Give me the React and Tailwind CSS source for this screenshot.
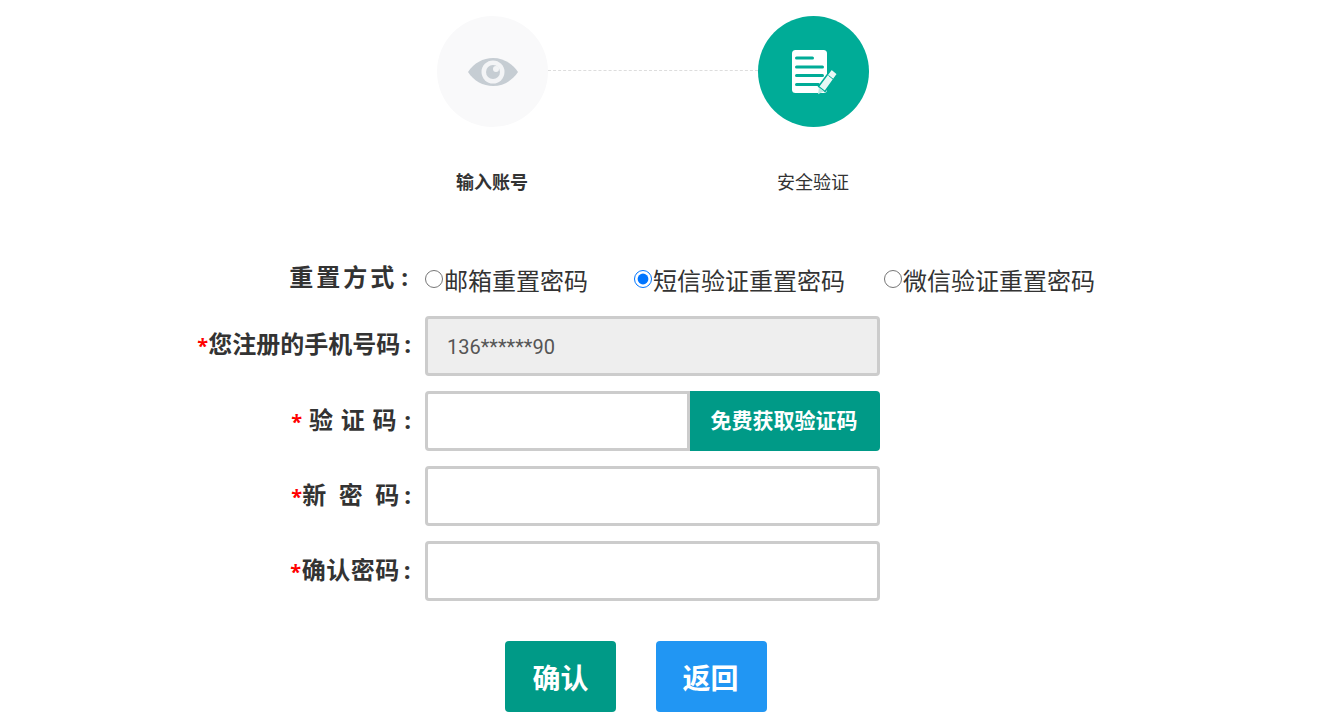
import React from 'react';

const font = { cjk: "font-['Open_Sans','Noto_Sans_CJK_SC',sans-serif]" }

const EyeIcon = () => (
    <svg width="50" height="30" viewBox="0 0 50 30">
        <path d="M0 15C6 6 15 1 25 1s19 5 25 14c-6 9-15 14-25 14S6 24 0 15z" fill="#c6cdd3" />
        <circle cx="25" cy="15" r="11.5" fill="#f3f4f6" />
        <circle cx="25" cy="15" r="7" fill="#c6cdd3" />
        <circle cx="28" cy="12" r="3" fill="#f3f4f6" />
    </svg>
)

const NoteIcon = () => (
    <svg width="46" height="46" viewBox="0 0 46 46">
        <rect x="0" y="0" width="35" height="43" rx="3.5" fill="#fff" />
        <path d="M4.500 8h16M4.500 17h26M4.500 25.500h26M4.500 34.500h22" stroke="#00ac97" strokeWidth="3" strokeLinecap="round" />
        <path d="M39.500 19L45.500 24 33 41.500 26.500 36.500z" fill="#e8f8f5" stroke="#00ac97" strokeWidth="1.500" strokeLinejoin="round" />
        <path d="M36.500 25.500l5 4" stroke="#00ac97" strokeWidth="1" />
        <path d="M27 37.500l5 3.800-6 3z" fill="#bfeae3" />
    </svg>
)

const Field = ({ mark, label, spacing, gap, up, children }) => (
    <div className="flex items-center h-[60px]">
        <div className={"w-[425px] pr-[14px] text-right text-2xl font-bold text-[#333] whitespace-pre " + up + " " + spacing}>
            <span className="text-[#f00] text-[20px]">{mark}</span>{label}<span className={gap}>:</span>
        </div>
        {children}
    </div>
)

const inputClass = "block w-[455px] h-[60px] border-[3px] border-[#ccc] rounded-[4px] bg-white outline-none"

const Radio = ({ label, checked, className }) => (
    <label className={"flex items-center " + className}>
        <input type="radio" name="way" defaultChecked={checked} className="w-[18px] h-[18px] m-0 mr-[1px] -mt-[3px]" />
        <span className="text-2xl text-[#333] pt-[2px]">{label}</span>
    </label>
)

const App = () => {
    return (
        <div className={"w-[1323px] h-[722px] overflow-hidden bg-white pt-4 " + font.cjk}>
            {/* steps */}
            <div className="ml-[437px]">
                <div className="flex items-center">
                    <div className="w-[111px] h-[111px] rounded-full bg-[#f9f9fa] flex items-center justify-center"><EyeIcon /></div>
                    <div className="w-[210px] border-t border-dashed border-[#ddd] -mt-[2px]"></div>
                    <div className="w-[111px] h-[111px] rounded-full bg-[#00ac97] flex items-center justify-center pl-[3px] pt-[2px]"><NoteIcon /></div>
                </div>
                <div className="flex mt-[42px] text-lg leading-[26px] text-[#333]">
                    <div className="w-[111px] pr-[1px] text-center font-bold">输入账号</div>
                    <div className="w-[210px]"></div>
                    <div className="w-[111px] pr-[1px] text-center">安全验证</div>
                </div>
            </div>

            {/* reset form */}
            <div className="mt-[60px] flex items-center h-[50px]">
                <div className="w-[425px] pr-[14px] text-right text-2xl font-bold text-[#333] tracking-[3px] -mt-[6px]">重置方式<span className="ml-[4px]">:</span></div>
                <Radio label="邮箱重置密码" className="mr-[46px]" />
                <Radio label="短信验证重置密码" checked className="mr-[39px]" />
                <Radio label="微信验证重置密码" />
            </div>
            <div className="mt-[11px] flex flex-col gap-[15px]">
                <Field mark="*" label="您注册的手机号码" gap="ml-[4px]" up="-mt-[4px]">
                    <input disabled value="136******90" className={inputClass + " !bg-[#eee] px-[19px] pt-[2px] text-[20px] text-[#555] font-['Roboto',sans-serif]"} />
                </Field>
                <Field mark="* " label="验 证 码 " up="-mt-[2px]" spacing="[word-spacing:1.5px]">
                    <div className="flex w-[455px]">
                        <input className="block w-[265px] h-[60px] border-[3px] border-[#ccc] rounded-l-[4px] bg-white outline-none" />
                        <button className="w-[190px] h-[60px] bg-[#009a87] rounded-r-[4px] pr-[2px] text-white text-[21px] font-bold">免费获取验证码</button>
                    </div>
                </Field>
                <Field mark="*" label="新  密  码" gap="ml-[5px]" up="-mt-[2px]">
                    <input className={inputClass} />
                </Field>
                <Field mark="*" label="确认密码" gap="ml-[4px]" up="-mt-[2px]" spacing="tracking-[0.5px]">
                    <input className={inputClass} />
                </Field>
            </div>

            <div className="mt-10 ml-[505px] flex gap-10">
                <button className="w-[111px] h-[71px] bg-[#009a87] rounded-[4px] pt-[3px] text-white text-[28px] font-bold">确认</button>
                <button className="w-[111px] h-[71px] bg-[#2196f3] rounded-[4px] pt-[3px] pr-[2px] text-white text-[28px] font-bold">返回</button>
            </div>
        </div>
    )
}

export default App
